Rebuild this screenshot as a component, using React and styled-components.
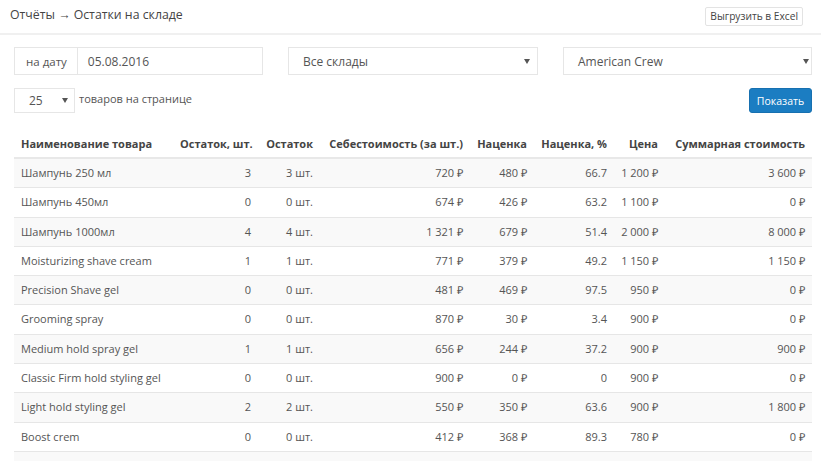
import React from "react";
import styled, { createGlobalStyle } from "styled-components";

const Global = createGlobalStyle`
  html, body { margin: 0; padding: 0; background: #fff; overflow: hidden; }
  body { font-family: "Open Sans", "Liberation Sans", sans-serif; color: #555; }
`;

const Page = styled.div`
  width: 821px;
`;

const TopBar = styled.header`
  height: 33px;
  border-bottom: 2px solid #f0f0f0;
  display: flex;
  align-items: center;
  justify-content: space-between;
  padding: 0 18px 0 10px;
  box-sizing: content-box;
`;

const Title = styled.h1`
  margin: 0;
  font-size: 12.3px;
  font-weight: 400;
  color: #444;
  position: relative;
  top: -2px;
`;

const SmallButton = styled.button`
  font-family: inherit;
  font-size: 10.2px;
  color: #444;
  background: #fff;
  border: 1px solid #e3e3e3;
  border-radius: 2px;
  height: 19px;
  padding: 0 4px;
  line-height: 17px;
  position: relative;
  top: 0px;
`;

const Content = styled.main`
  padding: 12px 9px 0 14px;
`;

const FilterGrid = styled.div`
  display: grid;
  grid-template-columns: 249px 250px 249px;
  gap: 25px;
`;

const Field = styled.div`
  display: flex;
  height: 28px;
  border: 1px solid #e6e6e6;
  box-sizing: border-box;
  font-size: 12px;
  color: #555;
`;

const Addon = styled.span`
  display: flex;
  align-items: center;
  padding: 0 10px 0 11px;
  font-size: 11.5px;
  border-right: 1px solid #e6e6e6;
`;

const FieldText = styled.span`
  flex: 1;
  display: flex;
  align-items: center;
  padding-left: ${(p) => p.$pad || 10}px;
  color: ${(p) => p.$color || "#555"};
`;

const Caret = styled.span`
  width: 0;
  height: 0;
  border-left: 3px solid transparent;
  border-right: 3px solid transparent;
  border-top: 5px solid #555;
  align-self: center;
  margin-right: ${(p) => p.$right || 6}px;
`;

const SecondRow = styled.div`
  display: flex;
  align-items: center;
  justify-content: space-between;
  margin-top: 13px;
`;

const PerPage = styled.div`
  display: flex;
  align-items: flex-start;
  gap: 4px;
  font-size: 11px;
  color: #555;
`;

const SmallSelect = styled.div`
  display: flex;
  width: 61px;
  height: 25px;
  border: 1px solid #e6e6e6;
  box-sizing: border-box;
  font-size: 12px;
`;

const PerPageLabel = styled.span`
  line-height: 22px;
`;

const PrimaryButton = styled.button`
  font-family: inherit;
  font-size: 10.5px;
  color: #fff;
  background: #1b7dc2;
  border: 1px solid #1770b0;
  border-radius: 3px;
  height: 25px;
  width: 63px;
  padding: 0;
`;

const Table = styled.table`
  margin-top: 17px;
  width: 798px;
  border-collapse: collapse;
  table-layout: fixed;
  font-size: 11px;
`;

const Th = styled.th`
  font-weight: 700;
  color: #444;
  text-align: ${(p) => (p.$left ? "left" : "right")};
  padding: 6px 7px 6px;
  line-height: 15px;
  border-bottom: 2px solid #e8e8e8;
  white-space: nowrap;
`;

const Tr = styled.tr`
  background: ${(p) => (p.$striped ? "#f9f9f9" : "#fff")};
`;

const Td = styled.td`
  text-align: ${(p) => (p.$left ? "left" : "right")};
  padding: 7px 7px 7px;
  line-height: 14.3px;
  border-top: 1px solid #e6e6e6;
  color: #555;
  white-space: nowrap;
`;

const widths = [159, 85, 62, 150, 64, 80, 51, 147];
const headers = [
  "Наименование товара",
  "Остаток, шт.",
  "Остаток",
  "Себестоимость (за шт.)",
  "Наценка",
  "Наценка, %",
  "Цена",
  "Суммарная стоимость",
];

const rows = [
  ["Шампунь 250 мл", "3", "3 шт.", "720 ₽", "480 ₽", "66.7", "1 200 ₽", "3 600 ₽"],
  ["Шампунь 450мл", "0", "0 шт.", "674 ₽", "426 ₽", "63.2", "1 100 ₽", "0 ₽"],
  ["Шампунь 1000мл", "4", "4 шт.", "1 321 ₽", "679 ₽", "51.4", "2 000 ₽", "8 000 ₽"],
  ["Moisturizing shave cream", "1", "1 шт.", "771 ₽", "379 ₽", "49.2", "1 150 ₽", "1 150 ₽"],
  ["Precision Shave gel", "0", "0 шт.", "481 ₽", "469 ₽", "97.5", "950 ₽", "0 ₽"],
  ["Grooming spray", "0", "0 шт.", "870 ₽", "30 ₽", "3.4", "900 ₽", "0 ₽"],
  ["Medium hold spray gel", "1", "1 шт.", "656 ₽", "244 ₽", "37.2", "900 ₽", "900 ₽"],
  ["Classic Firm hold styling gel", "0", "0 шт.", "900 ₽", "0 ₽", "0", "900 ₽", "0 ₽"],
  ["Light hold styling gel", "2", "2 шт.", "550 ₽", "350 ₽", "63.6", "900 ₽", "1 800 ₽"],
  ["Boost crem", "0", "0 шт.", "412 ₽", "368 ₽", "89.3", "780 ₽", "0 ₽"],
];

export default function App() {
  return (
    <Page>
      <Global />
      <TopBar>
        <Title>Отчёты → Остатки на складе</Title>
        <SmallButton>Выгрузить в Excel</SmallButton>
      </TopBar>
      <Content>
        <FilterGrid>
          <Field>
            <Addon>на дату</Addon>
            <FieldText>05.08.2016</FieldText>
          </Field>
          <Field>
            <FieldText $pad={14}>Все склады</FieldText>
            <Caret $right={7} />
          </Field>
          <Field>
            <FieldText $pad={14}>American Crew</FieldText>
            <Caret $right={2} />
          </Field>
        </FilterGrid>
        <SecondRow>
          <PerPage>
            <SmallSelect>
              <FieldText $pad={14}>25</FieldText>
              <Caret $right={6} />
            </SmallSelect>
            <PerPageLabel>товаров на странице</PerPageLabel>
          </PerPage>
          <PrimaryButton>Показать</PrimaryButton>
        </SecondRow>
        <Table>
          <colgroup>
            {widths.map((w, i) => (
              <col key={i} style={{ width: w }} />
            ))}
          </colgroup>
          <thead>
            <tr>
              {headers.map((h, i) => (
                <Th key={i} $left={i === 0}>
                  {h}
                </Th>
              ))}
            </tr>
          </thead>
          <tbody>
            {rows.map((r, ri) => (
              <Tr key={ri} $striped={ri % 2 === 0}>
                {r.map((c, ci) => (
                  <Td key={ci} $left={ci === 0}>
                    {c}
                  </Td>
                ))}
              </Tr>
            ))}
          </tbody>
          <tfoot>
            <Tr $striped>
              {widths.map((_, i) => (
                <Td key={i} $left={i === 0} />
              ))}
            </Tr>
          </tfoot>
        </Table>
      </Content>
    </Page>
  );
}
